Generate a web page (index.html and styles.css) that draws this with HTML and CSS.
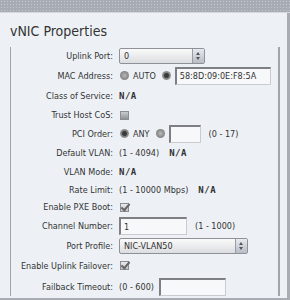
FILE: index.html
```html
<!DOCTYPE html>
<html lang="en">
<head>
  <meta charset="UTF-8">
  <title>vNIC Properties</title>
  <link rel="stylesheet" href="styles.css">
</head>
<body>
  <div class="header"></div>
  <div class="panel">
    <h1>vNIC Properties</h1>

    <div class="frame">
      <div class="form">
        <label>Uplink Port:</label>
        <div class="cell">
          <div class="select small"><span>0</span><b class="spin"></b></div>
        </div>

        <label>MAC Address:</label>
        <div class="cell">
          <i class="radio"></i><span class="opt">AUTO</span>
          <i class="radio on"></i>
          <input class="text mac" type="text" value="58:8D:09:0E:F8:5A">
        </div>

        <label>Class of Service:</label>
        <div class="cell"><strong>N/A</strong></div>

        <label>Trust Host CoS:</label>
        <div class="cell"><i class="check"></i></div>

        <label>PCI Order:</label>
        <div class="cell">
          <i class="radio on"></i><span class="opt">ANY</span>
          <i class="radio"></i>
          <input class="text pci" type="text">
          <span class="hint">(0 - 17)</span>
        </div>

        <label>Default VLAN:</label>
        <div class="cell"><span class="range">(1 - 4094)</span><strong>N/A</strong></div>

        <label>VLAN Mode:</label>
        <div class="cell"><strong>N/A</strong></div>

        <label>Rate Limit:</label>
        <div class="cell"><span class="range">(1 - 10000 Mbps)</span><strong>N/A</strong></div>

        <label>Enable PXE Boot:</label>
        <div class="cell"><i class="check checked"></i></div>

        <label>Channel Number:</label>
        <div class="cell">
          <input class="text chan" type="text" value="1">
          <span class="hint">(1 - 1000)</span>
        </div>

        <label>Port Profile:</label>
        <div class="cell">
          <div class="select wide"><span>NIC-VLAN50</span><b class="spin"></b></div>
        </div>

        <label>Enable Uplink Failover:</label>
        <div class="cell"><i class="check checked"></i></div>

        <label>Failback Timeout:</label>
        <div class="cell">
          <span class="range tight">(0 - 600)</span>
          <input class="text fail" type="text">
        </div>
      </div>
    </div>
  </div>
</body>
</html>
```

FILE: styles.css
```css
html, body {
  margin: 0;
  padding: 0;
}

body {
  width: 290px;
  height: 300px;
  overflow: hidden;
  font-family: "DejaVu Sans Condensed", "DejaVu Sans", sans-serif;
  font-size: 9px;
  color: #333;
  background: #eef1f5;
}

/* dotted grey strip on top */
.header {
  height: 12px;
  background-color: #a7abb3;
  background-image: radial-gradient(circle, #c4c7cd 0.6px, transparent 0.8px);
  background-size: 3px 3px;
  border-bottom: 1px solid #d6d9de;
}

.panel {
  height: 287px;
  box-sizing: border-box;
  border-right: 3px solid #a9acb3;
  border-bottom: 2px solid #a9acb3;
  background: #edf1f6;
  padding-left: 10px;
  padding-right: 7px;
}

h1 {
  margin: 0;
  padding-top: 10px;
  height: 24px;
  font-size: 14px;
  font-weight: normal;
  color: #333;
}

.frame {
  border-left: 1px solid #a2a4ab;
  border-right: 2px solid #a2a4ab;
  height: 249px;
}

.form {
  display: grid;
  grid-template-columns: 102px 1fr;
  grid-template-rows: 18px 21px 20px 18px 19px 19px 19px 17px 18px 20px 19px 21px 21px;
  column-gap: 6px;
  align-items: center;
}

label {
  text-align: right;
  white-space: nowrap;
}

.cell {
  display: flex;
  align-items: center;
  white-space: nowrap;
}

strong {
  font-family: "DejaVu Sans Mono", monospace;
  font-weight: bold;
  font-size: 9px;
  letter-spacing: 0.5px;
}

.range {
  margin-right: 10px;
}

.range.tight {
  margin-right: 5px;
}

.hint {
  margin-left: 8px;
}

.opt {
  margin: 0 5px 0 4px;
}

/* select boxes */
.select {
  height: 16px;
  box-sizing: border-box;
  border: 1px solid #8e9196;
  border-radius: 2px;
  background: linear-gradient(#fafafa, #dcdde0);
  display: flex;
  align-items: center;
  justify-content: space-between;
  padding-left: 4px;
}

.select.small {
  width: 86px;
}

.select.wide {
  width: 129px;
}

.spin {
  width: 11px;
  height: 14px;
  border-left: 1px solid #9a9da3;
  background: linear-gradient(#e8ebf0, #b7bcc6);
  position: relative;
}

.spin::before,
.spin::after {
  content: "";
  position: absolute;
  left: 3px;
  border-left: 2.5px solid transparent;
  border-right: 2.5px solid transparent;
}

.spin::before {
  top: 3px;
  border-bottom: 3px solid #555;
}

.spin::after {
  bottom: 3px;
  border-top: 3px solid #555;
}

/* radio buttons */
.radio {
  display: inline-block;
  width: 9px;
  height: 9px;
  border-radius: 50%;
  margin-left: 1px;
  background: radial-gradient(circle at 50% 50%, #b8b8b8 0, #8a8a8a 60%, #6c6c6c 100%);
}

.radio.on {
  background: radial-gradient(circle at 50% 50%, #333 0, #444 35%, #7d7d7d 45%, #999 70%, #6a6a6a 100%);
}

/* checkboxes */
.check {
  display: inline-block;
  width: 9px;
  height: 9px;
  margin-left: 1px;
  box-sizing: border-box;
  border: 1px solid #8c8d92;
  background: linear-gradient(#c9cacd, #8f9196);
  position: relative;
}

.check.checked {
  background: linear-gradient(#e9eaec, #c2c4c8);
}

.check.checked::after {
  content: "";
  position: absolute;
  left: 2px;
  top: -2px;
  width: 3px;
  height: 7px;
  border-right: 2px solid #666;
  border-bottom: 2px solid #666;
  transform: rotate(40deg);
}

/* text inputs */
.text {
  height: 18px;
  box-sizing: border-box;
  border: 1px solid #c9cbcf;
  border-top: 2px solid #7d7f84;
  border-left: 2px solid #7d7f84;
  background: #f7f8fa;
  padding: 0 3px;
  font-family: inherit;
  font-size: 9px;
  color: #333;
  outline: none;
}

.text.mac {
  width: 96px;
  margin-left: 4px;
}

.text.pci {
  width: 32px;
  margin-left: 4px;
}

.text.chan {
  width: 68px;
}

.text.fail {
  width: 67px;
}
```
